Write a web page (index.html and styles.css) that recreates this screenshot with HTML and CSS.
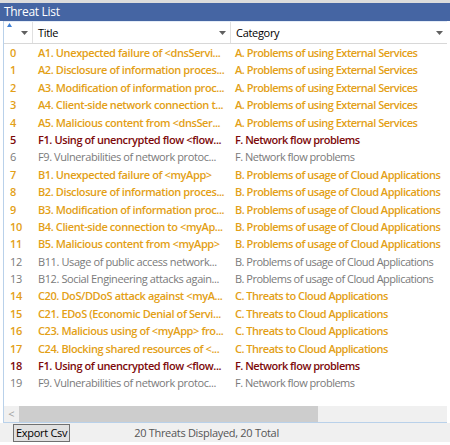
FILE: index.html
```html
<!DOCTYPE html>
<html>
<head>
<meta charset="utf-8">
<link rel="stylesheet" href="styles.css">
</head>
<body>
<div class="window">
  <div class="topstrip"></div>
  <div class="titlebar">Threat List</div>
  <div class="grid">
    <div class="header">
      <div class="hcell hnum">
        <svg class="sort" width="5" height="4" viewBox="0 0 5 4"><polygon points="2.5,0 5,4 0,4" fill="#3c7fd6"/></svg>
        <svg class="drop" width="7" height="4" viewBox="0 0 7 4"><polygon points="0,0 7,0 3.5,4" fill="#606060"/></svg>
      </div>
      <div class="hcell"><span>Title</span><svg class="drop" width="7" height="4" viewBox="0 0 7 4"><polygon points="0,0 7,0 3.5,4" fill="#606060"/></svg></div>
      <div class="hcell last"><span>Category</span><svg class="drop" width="7" height="4" viewBox="0 0 7 4"><polygon points="0,0 7,0 3.5,4" fill="#606060"/></svg></div>
    </div>
    <div class="body">
      <div class="row orange"><span class="n">0</span><span class="t">A1. Unexpected failure of &lt;dnsServi...</span><span class="c">A. Problems of using External Services</span></div>
      <div class="row orange"><span class="n">1</span><span class="t">A2. Disclosure of information proces...</span><span class="c">A. Problems of using External Services</span></div>
      <div class="row orange"><span class="n">2</span><span class="t">A3. Modification of information proc...</span><span class="c">A. Problems of using External Services</span></div>
      <div class="row orange"><span class="n">3</span><span class="t">A4. Client-side network connection t...</span><span class="c">A. Problems of using External Services</span></div>
      <div class="row orange"><span class="n">4</span><span class="t">A5. Malicious content from &lt;dnsSer...</span><span class="c">A. Problems of using External Services</span></div>
      <div class="row maroon"><span class="n">5</span><span class="t">F1. Using of unencrypted flow &lt;flow...</span><span class="c">F. Network flow problems</span></div>
      <div class="row grey"><span class="n">6</span><span class="t">F9. Vulnerabilities of network protoc...</span><span class="c">F. Network flow problems</span></div>
      <div class="row orange"><span class="n">7</span><span class="t">B1. Unexpected failure of &lt;myApp&gt;</span><span class="c">B. Problems of usage of Cloud Applications</span></div>
      <div class="row orange"><span class="n">8</span><span class="t">B2. Disclosure of information proces...</span><span class="c">B. Problems of usage of Cloud Applications</span></div>
      <div class="row orange"><span class="n">9</span><span class="t">B3. Modification of information proc...</span><span class="c">B. Problems of usage of Cloud Applications</span></div>
      <div class="row orange"><span class="n">10</span><span class="t">B4. Client-side connection to &lt;myAp...</span><span class="c">B. Problems of usage of Cloud Applications</span></div>
      <div class="row orange"><span class="n">11</span><span class="t">B5. Malicious content from &lt;myApp&gt;</span><span class="c">B. Problems of usage of Cloud Applications</span></div>
      <div class="row grey"><span class="n">12</span><span class="t">B11. Usage of public access network...</span><span class="c">B. Problems of usage of Cloud Applications</span></div>
      <div class="row grey"><span class="n">13</span><span class="t">B12. Social Engineering attacks again...</span><span class="c">B. Problems of usage of Cloud Applications</span></div>
      <div class="row orange"><span class="n">14</span><span class="t">C20. DoS/DDoS attack against &lt;myA...</span><span class="c">C. Threats to Cloud Applications</span></div>
      <div class="row orange"><span class="n">15</span><span class="t">C21. EDoS (Economic Denial of Servi...</span><span class="c">C. Threats to Cloud Applications</span></div>
      <div class="row orange"><span class="n">16</span><span class="t">C23. Malicious using of &lt;myApp&gt; fro...</span><span class="c">C. Threats to Cloud Applications</span></div>
      <div class="row orange"><span class="n">17</span><span class="t">C24. Blocking shared resources of &lt;...</span><span class="c">C. Threats to Cloud Applications</span></div>
      <div class="row maroon"><span class="n">18</span><span class="t">F1. Using of unencrypted flow &lt;flow...</span><span class="c">F. Network flow problems</span></div>
      <div class="row grey"><span class="n">19</span><span class="t">F9. Vulnerabilities of network protoc...</span><span class="c">F. Network flow problems</span></div>
    </div>
    <div class="hscroll">
      <div class="arrow">&lt;</div>
      <div class="thumb"></div>
      <div class="track"></div>
    </div>
  </div>
  <div class="footer">
    <button class="export">Export Csv</button>
    <span class="status">20 Threats Displayed, 20 Total</span>
  </div>
</div>
</body>
</html>
```
FILE: styles.css
```css
html, body {
  margin: 0;
  padding: 0;
  background: #ffffff;
}
.window {
  width: 450px;
  height: 445px;
  display: flex;
  flex-direction: column;
  font-family: "Open Sans", "Noto Sans", sans-serif;
  font-size: 11px;
  overflow: hidden;
}
.topstrip {
  height: 3px;
  background: #dcdcdc;
}
.titlebar {
  height: 18px;
  line-height: 18px;
  background: #4565a3;
  color: #ffffff;
  padding-left: 4px;
  font-size: 12px;
  letter-spacing: -0.3px;
}
.grid {
  margin-left: 3px;
  margin-right: 3px;
  border-left: 1px solid #b9d1ea;
  border-bottom: 1px solid #b9d1ea;
  display: flex;
  flex-direction: column;
}
.header {
  display: grid;
  grid-template-columns: 29px 198px 1fr;
  border-top: 1px solid #e4ecf7;
  border-bottom: 1px solid #d8d8d8;
  box-sizing: border-box;
  height: 23px;
}
.hcell {
  position: relative;
  display: flex;
  align-items: center;
  justify-content: space-between;
  padding: 0 4px 0 5px;
  border-right: 1px solid #e0e0e0;
  color: #000;
  font-size: 11px;
  letter-spacing: -0.3px;
}
.hcell.last {
  border-right: none;
}
.hnum {
  justify-content: flex-end;
}
.sort {
  position: absolute;
  left: 3px;
  top: 1px;
}
.body {
  height: 362px;
}
.row {
  height: 17.4px;
  line-height: 17.4px;
  display: grid;
  grid-template-columns: 29px 198px 1fr;
  white-space: nowrap;
  font-weight: 600;
  letter-spacing: -0.4px;
}
.row span {
  overflow: hidden;
}
.n {
  padding-left: 6px;
}
.t {
  padding-left: 5px;
}
.c {
  padding-left: 4px;
  letter-spacing: -0.5px;
}
.orange { color: #e3a016; }
.maroon { color: #7d0a0a; }
.grey { color: #7a7a7a; font-weight: 400; }
.hscroll {
  height: 16px;
  display: flex;
  background: #f0f0f0;
}
.arrow {
  width: 15px;
  color: #a0a0a0;
  font-size: 11px;
  line-height: 16px;
  text-align: center;
}
.thumb {
  width: 299px;
  background: #cdcdcd;
}
.track {
  flex: 1;
}
.footer {
  height: 19px;
  background: #f0f0f0;
  display: flex;
  align-items: center;
  padding-left: 13px;
}
.export {
  font-family: "Open Sans", "Noto Sans", sans-serif;
  font-size: 11px;
  letter-spacing: -0.3px;
  height: 18px;
  padding: 0 2px;
  margin: 0;
  border: 1px solid #707070;
  background: #e1e1e1;
  color: #000;
  line-height: 16px;
}
.status {
  margin-left: 64px;
  color: #555555;
  font-size: 11px;
  letter-spacing: -0.3px;
}
```
